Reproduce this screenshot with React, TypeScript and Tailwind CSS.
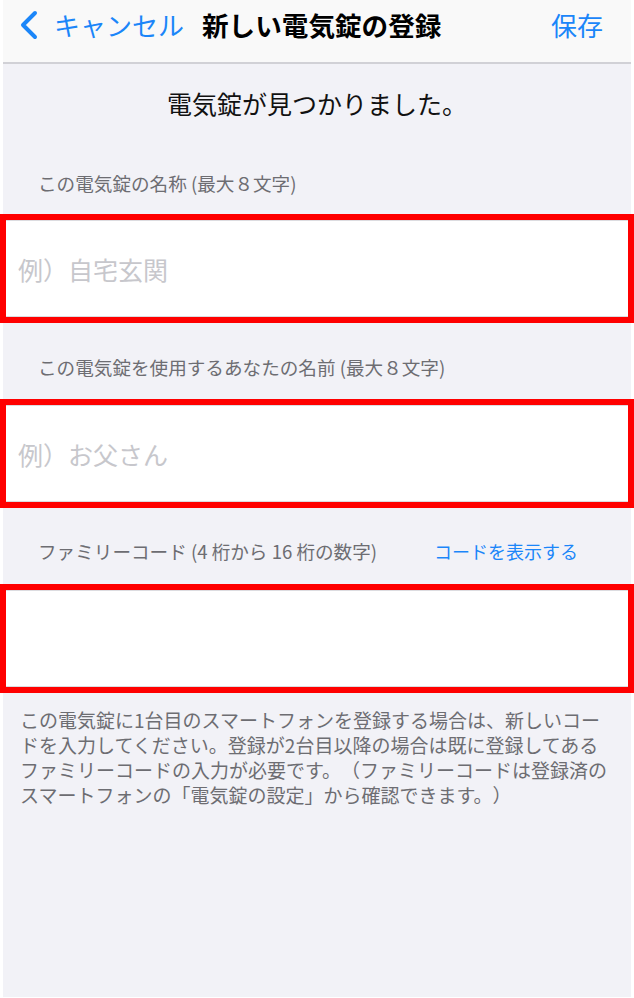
import React from "react";

const font = { fontFamily: '"Noto Sans CJK JP", "Noto Sans", sans-serif' };

function BackChevron() {
  return (
    <svg width="22" height="30" viewBox="0 0 22 30" fill="none" className="shrink-0">
      <path d="M17 3 L5 15 L17 27" stroke="#1b86f9" strokeWidth="4" strokeLinecap="round" strokeLinejoin="round" />
    </svg>
  );
}

function SectionHeader({ children, action }: { children: React.ReactNode; action?: string }) {
  return (
    <div className="flex items-center justify-between pl-[35px] pr-[53px]">
      <span className="text-[18.6px] leading-[24px] text-[#6d6d72] whitespace-nowrap">{children}</span>
      {action && <span className="text-[18px] leading-[24px] text-[#1b86f9] whitespace-nowrap">{action}</span>}
    </div>
  );
}

function FieldBox({ placeholder }: { placeholder?: string }) {
  return (
    <div className="-mx-[3px] border-[6px] border-[#ff0000]">
      <div className="flex h-[97px] items-center border-y border-[#dcdce0] bg-white pl-[12px]">
        {placeholder && <span className="text-[25px] leading-[30px] text-[#c7c7cc]">{placeholder}</span>}
      </div>
    </div>
  );
}

const notes = [
  "この電気錠に1台目のスマートフォンを登録する場合は、新しいコー",
  "ドを入力してください。登録が2台目以降の場合は既に登録してある",
  "ファミリーコードの入力が必要です。（ファミリーコードは登録済の",
  "スマートフォンの「電気錠の設定」から確認できます。）",
];

export default function App() {
  return (
    <div className="min-h-[998px] bg-white px-[3px] [text-spacing-trim:space-all]" style={font}>
      <div className="min-h-[997px] bg-[#f2f2f7]">
        <header className="flex h-[64px] items-center border-b-2 border-[#d1d1d6] bg-[#f9f9f9] pb-[12px]">
          <div className="flex items-center gap-[14px] pl-[15px]">
            <BackChevron />
            <span className="text-[26px] leading-[32px] text-[#1b86f9]">キャンセル</span>
          </div>
          <h1 className="ml-[18px] text-[26.6px] font-bold leading-[32px] text-black">新しい電気錠の登録</h1>
          <span className="ml-auto mr-[28px] text-[26px] leading-[32px] text-[#1b86f9]">保存</span>
        </header>

        <div className="flex h-[78px] items-center justify-center">
          <p className="text-[25px] leading-[30px] text-[#111]">電気錠が見つかりました。</p>
        </div>

        <div className="pt-[29px] pb-[19px]">
          <SectionHeader>この電気錠の名称 (最大８文字)</SectionHeader>
        </div>
        <FieldBox placeholder="例）自宅玄関" />

        <div className="pt-[32px] pb-[20px]">
          <SectionHeader>この電気錠を使用するあなたの名前 (最大８文字)</SectionHeader>
        </div>
        <FieldBox placeholder="例）お父さん" />

        <div className="pt-[31px] pb-[21px]">
          <SectionHeader action="コードを表示する">ファミリーコード (4 桁から 16 桁の数字)</SectionHeader>
        </div>
        <FieldBox />

        <div className="pl-[17px] pt-[14px] text-[19px] leading-[25px] text-[#6d6d72]">
          {notes.map((line) => (
            <p key={line} className="whitespace-nowrap">{line}</p>
          ))}
        </div>
      </div>
    </div>
  );
}
